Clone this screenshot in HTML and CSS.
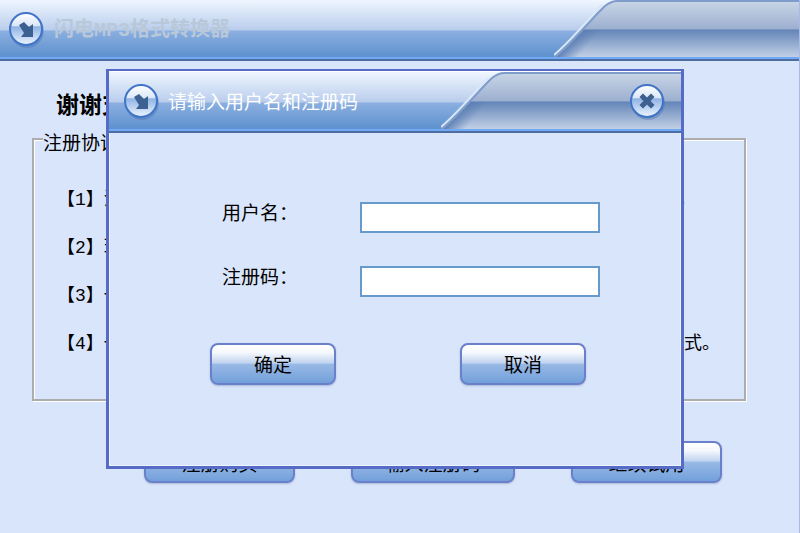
FILE: index.html
```
<!DOCTYPE html>
<html lang="zh-CN">
<head>
<meta charset="UTF-8">
<meta name="viewport" content="width=device-width, initial-scale=1.0">
<title>闪电MP3格式转换器</title>
<link rel="stylesheet" href="styles.css">
</head>
<body>
<!-- shared gradients and icons -->
<svg class="defs" width="0" height="0" aria-hidden="true">
    <defs>
        <linearGradient id="tabFill" x1="0" y1="0" x2="0" y2="1">
            <stop offset="0" stop-color="#cbd7e8"/>
            <stop offset="0.5" stop-color="#9db0d0"/>
            <stop offset="0.53" stop-color="#6486b8"/>
            <stop offset="1" stop-color="#c2d0e6"/>
        </linearGradient>
        <linearGradient id="tabShade" gradientUnits="userSpaceOnUse" x1="18" y1="38" x2="31" y2="49">
            <stop offset="0" stop-color="#5a7db3"/>
            <stop offset="1" stop-color="#5a7db3" stop-opacity="0"/>
        </linearGradient>
        <linearGradient id="ball" x1="0" y1="0" x2="0" y2="1">
            <stop offset="0" stop-color="#ffffff"/>
            <stop offset="0.4" stop-color="#dbe7f8"/>
            <stop offset="0.43" stop-color="#8fb3e4"/>
            <stop offset="1" stop-color="#eef6ff"/>
        </linearGradient>
        <symbol id="curve" viewBox="0 0 64 57" preserveAspectRatio="none">
            <path d="M0 57C20 40 38 17 50 6Q57 0 64 0V57Z" fill="url(#tabFill)"/>
            <path d="M0 57C13 46 22 37 29 30H64V57Z" fill="url(#tabShade)"/>
            <path d="M1 57C21 40 39 17 51 6Q57 1 64 1" fill="none" stroke="#7f9dca" stroke-width="2"/>
            <path d="M0 55C20 38 37 16 48 5" fill="none" stroke="#d9e7f8" stroke-width="2"/>
        </symbol>
        <symbol id="arrow" viewBox="0 0 38 38">
            <circle cx="20" cy="21" r="17" fill="#4a70ad" opacity="0.4"/>
            <circle cx="19" cy="19" r="16" fill="url(#ball)" stroke="#3f74c6" stroke-width="2"/>
            <path d="M12 15L17 12L22 17L26 14V27H14L17 23Z" fill="#3c608f"/>
        </symbol>
        <symbol id="cross" viewBox="0 0 38 38">
            <circle cx="20" cy="21" r="17" fill="#4a70ad" opacity="0.4"/>
            <circle cx="19" cy="19" r="16" fill="url(#ball)" stroke="#3f74c6" stroke-width="2"/>
            <path d="M15 15L23 23M23 15L15 23" stroke="#3c608f" stroke-width="5" stroke-linecap="square"/>
        </symbol>
    </defs>
</svg>

<div class="window">
    <header class="titlebar">
        <svg class="ball main-ball" aria-hidden="true"><use href="#arrow"/></svg>
        <span class="app-title">闪电MP3格式转换器</span>
        <div class="tab">
            <svg class="curve" aria-hidden="true"><use href="#curve"/></svg>
            <div class="tab-fill"></div>
        </div>
    </header>
    <main class="content">
        <h1>谢谢支持</h1>
        <fieldset>
            <legend>注册协议</legend>
            <ul class="terms">
                <li><span>【1】注</span><span class="comma">，</span></li>
                <li><span>【2】现</span></li>
                <li><span>【3】一</span></li>
                <li><span>【4】一</span><span>式。</span></li>
            </ul>
        </fieldset>
        <div class="actions">
            <button type="button" class="btn">注册购买</button>
            <button type="button" class="btn btn-wide">输入注册码</button>
            <button type="button" class="btn">继续试用</button>
        </div>
    </main>
</div>

<div class="dialog" role="dialog" aria-labelledby="dialogTitle">
    <div class="titlebar">
        <svg class="ball dialog-ball" aria-hidden="true"><use href="#arrow"/></svg>
        <span class="dialog-title" id="dialogTitle">请输入用户名和注册码</span>
        <div class="tab">
            <svg class="curve" aria-hidden="true"><use href="#curve"/></svg>
            <div class="tab-fill">
                <button type="button" class="close" aria-label="关闭"><svg class="ball" aria-hidden="true"><use href="#cross"/></svg></button>
            </div>
        </div>
    </div>
    <form class="register">
        <div class="row">
            <label for="username">用户名：</label>
            <input type="text" id="username">
        </div>
        <div class="row">
            <label for="code">注册码：</label>
            <input type="text" id="code">
        </div>
        <div class="buttons">
            <button type="button" class="btn btn-small">确定</button>
            <button type="button" class="btn btn-small">取消</button>
        </div>
    </form>
</div>
</body>
</html>
```
FILE: styles.css
```
* {
    box-sizing: border-box;
}

body {
    margin: 0;
    background-color: #d9e5fb;
    color: #000;
    font-family: "Noto Sans CJK SC", sans-serif;
    font-size: 19px;
    line-height: 24px;
}

.defs {
    position: absolute;
}

.window {
    min-height: 100vh;
    border-right: 1px solid #a9b9e8;
}

/* title bars */
.titlebar {
    display: flex;
    align-items: center;
    height: 61px;
    padding-bottom: 4px;
    background: linear-gradient(#4d6c9f, #4d6c9f) bottom / 100% 2px no-repeat,
        linear-gradient(#70aaf6, #70aaf6) bottom / 100% 4px no-repeat,
        linear-gradient(#eff6ff 0, #b9cdec 30px, #8bafe0 31px, #5e91ce 57px);
}

.ball {
    display: block;
    flex: none;
    width: 38px;
    height: 38px;
}

.main-ball {
    margin-left: 7px;
}

.app-title {
    margin-left: 9px;
    padding-top: 4px;
    color: #b9c8d9;
    font-family: "Liberation Mono", "Noto Sans CJK SC", monospace;
    font-size: 20px;
    font-weight: bold;
}

.tab {
    display: flex;
    width: 245px;
    height: 57px;
    margin-left: auto;
}

.curve {
    flex: none;
    width: 64px;
    height: 100%;
}

.tab-fill {
    display: flex;
    flex: 1;
    align-items: center;
    justify-content: flex-end;
    background: linear-gradient(#7f9dca, #7f9dca) top / 100% 2px no-repeat,
        linear-gradient(#cbd7e8 0, #9db0d0 50%, #6486b8 53%, #c2d0e6 100%);
}

/* main window */
.content {
    padding: 28px 53px 0 32px;
}

h1 {
    margin: 0 0 7px 24px;
    font-size: 23px;
    line-height: 28px;
}

fieldset {
    height: 277px;
    margin: 0;
    padding: 34px 24px 0 23px;
    border: 2px solid #adadad;
    box-shadow: 1px 1px 0 #fff, inset 1px 1px 0 #fff;
}

legend {
    margin-left: -14px;
    padding: 6px 0 0;
    background-color: #d9e5fb;
}

.terms {
    display: flex;
    flex-direction: column;
    gap: 24px;
    margin: 0;
    padding: 0;
    font-family: "Liberation Mono", "Noto Sans CJK SC", monospace;
    font-size: 18px;
    list-style: none;
}

.terms li {
    display: flex;
    justify-content: space-between;
}

.comma {
    padding-right: 24px;
}

.actions {
    display: flex;
    justify-content: space-between;
    margin-top: 40px;
    padding: 0 24px 0 112px;
}

.btn {
    width: 151px;
    height: 42px;
    padding: 0;
    border: 2px solid #6a80cb;
    border-radius: 8px;
    background: linear-gradient(#ffffff 0, #f5f8fd 20%, #bfd2ee 48%, #98b9e5 50%, #73a0db 100%);
    box-shadow: 0 1px 2px #a8b6d2;
    color: #000;
    font: inherit;
}

.actions .btn {
    padding-top: 2px;
}

.actions .btn-wide {
    width: 164px;
}

.btn-small {
    width: 126px;
}

/* register dialog */
.dialog {
    position: absolute;
    top: 69px;
    left: 106px;
    right: 116px;
    border: 3px solid #566bc5;
    border-top-width: 2px;
    background-color: #d9e5fb;
    box-shadow: inset 0 0 0 1px #eef4ff;
}

.dialog .titlebar {
    height: 62px;
    border-top: 1px solid #fff;
}

.dialog-ball {
    margin-left: 13px;
}

.dialog-title {
    margin-left: 8px;
    color: #fff;
}

.dialog .tab {
    width: 240px;
}

.close {
    margin-right: 15px;
    padding: 0;
    border: 0;
    background: none;
}

.register {
    padding: 69px 81px 81px 101px;
}

.row {
    display: flex;
    justify-content: space-between;
    margin-bottom: 33px;
    padding-left: 12px;
}

.row label {
    line-height: 20px;
}

.row input {
    width: 240px;
    height: 31px;
    padding: 0 6px;
    border: 2px solid #6699cc;
    background-color: #fff;
    font: inherit;
}

.buttons {
    display: flex;
    justify-content: space-between;
    margin-top: 46px;
    padding-right: 14px;
}
```
